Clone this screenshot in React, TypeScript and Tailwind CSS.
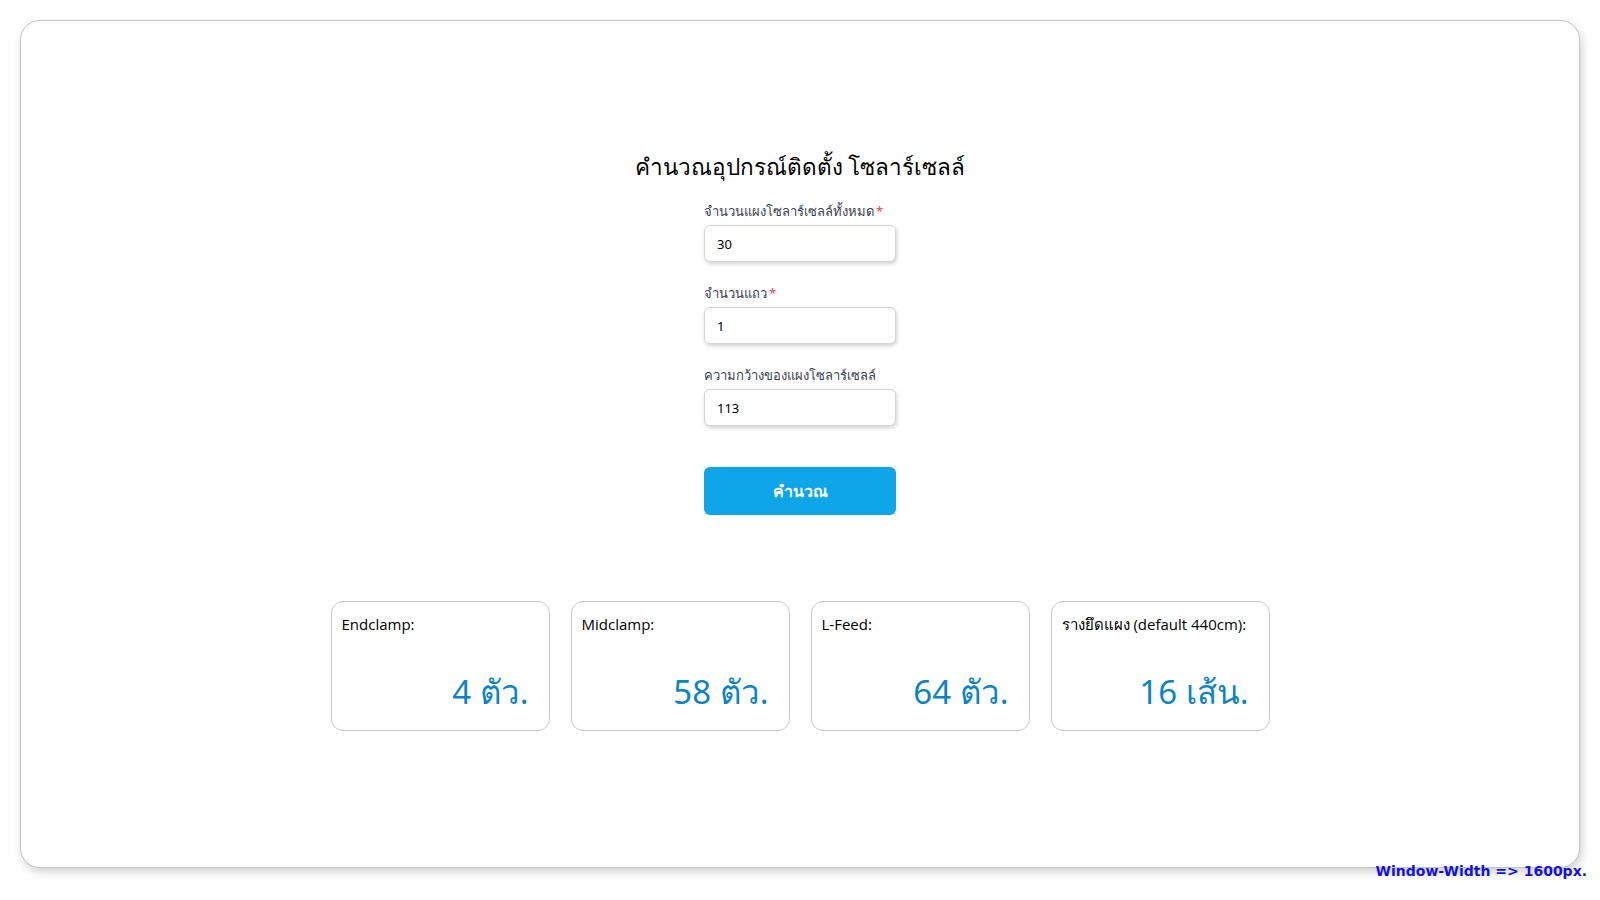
import { useState } from "react";

type Field = { label: string; value: string; required?: boolean };

const fields: Field[] = [
	{ label: "จำนวนแผงโซลาร์เซลล์ทั้งหมด", value: "30", required: true },
	{ label: "จำนวนแถว", value: "1", required: true },
	{ label: "ความกว้างของแผงโซลาร์เซลล์", value: "113" },
];

const results = [
	{ label: "Endclamp:", value: "4 ตัว." },
	{ label: "Midclamp:", value: "58 ตัว." },
	{ label: "L-Feed:", value: "64 ตัว." },
	{ label: "รางยึดแผง (default 440cm):", value: "16 เส้น." },
];

function ResultCard({ label, value }: { label: string; value: string }) {
	return (
		<div className="flex h-[130px] w-[219px] flex-col justify-between rounded-[12px] border border-[#c8c8c8] bg-white pb-[16px] pl-[10px] pr-[20px] pt-[11px]">
			<div className="text-[15px] leading-[22px] text-black" style={{ fontFamily: '"Open Sans", "Noto Sans", sans-serif' }}>
				{label}
			</div>
			<div className="text-right text-[33px] leading-[44px] text-[#0a84c6]">{value}</div>
		</div>
	);
}

export default function App() {
	const [values, setValues] = useState(fields.map((f) => f.value));

	return (
		<div
			className="relative h-[900px] w-full bg-white px-[20px] pt-[20px]"
			style={{ fontFamily: '"Noto Sans", "Open Sans", sans-serif' }}
		>
			<div className="flex h-[848px] flex-col items-center rounded-[20px] border border-[#c4c4c4] bg-white pt-[130px] shadow-[2px_4px_10px_rgba(0,0,0,0.18)]">
				<h1 className="h-[32px] text-[22.5px] leading-[32px] text-black">คำนวณอุปกรณ์ติดตั้ง โซลาร์เซลล์</h1>

				<form className="mt-[18px] flex w-[192px] flex-col" onSubmit={(e) => e.preventDefault()}>
					{fields.map((field, i) => (
						<div key={field.label} className={i === 0 ? "" : "mt-[21px]"}>
							<label className="block text-[13px] leading-[20px] text-[#374151]">
								{field.label}
								{field.required && <span className="ml-[2px] text-[#ef4444]">*</span>}
							</label>
							<input
								className="mt-[4px] h-[37px] w-full rounded-[6px] border border-[#d1d5db] bg-white px-[12px] text-[13px] text-black shadow-[1px_2px_4px_rgba(0,0,0,0.18)] outline-none"
								value={values[i]}
								onChange={(e) => setValues(values.map((v, j) => (j === i ? e.target.value : v)))}
							/>
						</div>
					))}

					<button
						type="submit"
						className="mt-[41px] h-[48px] w-full rounded-[6px] bg-[#0ea5e9] text-[16px] font-semibold text-white"
					>
						คำนวณ
					</button>
				</form>

				<div className="mt-[86px] flex gap-[21px]">
					{results.map((r) => (
						<ResultCard key={r.label} label={r.label} value={r.value} />
					))}
				</div>
			</div>

			<div
				className="absolute bottom-[19px] right-[13px] text-[14px] font-bold leading-[20px] text-[#1010ee]"
				style={{ fontFamily: '"DejaVu Sans", sans-serif' }}
			>
				Window-Width =&gt; 1600px.
			</div>
		</div>
	);
}
